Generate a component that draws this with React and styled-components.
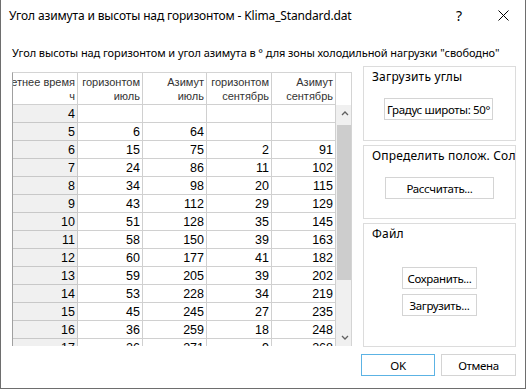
import React from 'react'
import styled, { createGlobalStyle } from 'styled-components'

const GlobalStyle = createGlobalStyle`
  html, body {
    margin: 0;
    padding: 0;
    background: #ffffff;
  }
  body {
    font-family: 'Noto Sans', 'Open Sans', sans-serif;
    font-size: 12px;
    color: #000;
  }
`

const uiFont = `'Noto Sans', 'Open Sans', sans-serif`
const gridFont = `'Liberation Sans', Arial, sans-serif`

const rows = [
  [4, '', '', '', ''],
  [5, 6, 64, '', ''],
  [6, 15, 75, 2, 91],
  [7, 24, 86, 11, 102],
  [8, 34, 98, 20, 115],
  [9, 43, 112, 29, 129],
  [10, 51, 128, 35, 145],
  [11, 58, 150, 39, 163],
  [12, 60, 177, 41, 182],
  [13, 59, 205, 39, 202],
  [14, 53, 228, 34, 219],
  [15, 45, 245, 27, 235],
  [16, 36, 259, 18, 248],
  [17, 26, 271, 9, 268],
]

const headers = [
  ['Летнее время', 'ч'],
  ['горизонтом', 'июль'],
  ['Азимут', 'июль'],
  ['горизонтом', 'сентябрь'],
  ['Азимут', 'сентябрь'],
]

const colWidths = [65, 65, 64, 65, 64]

const Window = styled.div`
  width: 526px;
  height: 389px;
  box-sizing: border-box;
  border: 1px solid #6e6e6e;
  border-top: none;
  background: #fff;
  display: flex;
  flex-direction: column;
  font-family: ${uiFont};
  overflow: hidden;
`

const TitleBar = styled.div`
  height: 31px;
  display: flex;
  align-items: center;
  padding-left: 8px;
  font-size: 12px;
  letter-spacing: -0.15px;
  color: #000;
`

const TitleText = styled.div`
  flex: 1;
  white-space: nowrap;
`

const TitleButton = styled.div`
  width: 44px;
  height: 31px;
  display: flex;
  align-items: center;
  justify-content: center;
  font-size: 14px;
  color: #000;
`

const Body = styled.div`
  flex: 1;
  display: flex;
  flex-direction: column;
  padding: 0 9px 0 11px;
`

const Subtitle = styled.div`
  height: 35px;
  display: flex;
  align-items: center;
  padding-top: 8px;
  box-sizing: border-box;
  font-size: 11px;
  letter-spacing: -0.08px;
  white-space: nowrap;
`

const Main = styled.div`
  display: flex;
  gap: 11px;
  height: 281px;
`

const GridFrame = styled.div`
  margin-top: 6px;
  width: 340px;
  height: 274px;
  box-sizing: border-box;
  border-left: 1px solid #a0a0a0;
  border-top: 1px solid #d4d4d4;
  border-right: 1px solid #d4d4d4;
  display: flex;
  overflow: hidden;
  font-family: ${gridFont};
  font-size: 11px;
`

const Table = styled.div`
  display: flex;
  flex-direction: column;
`

const Row = styled.div`
  display: flex;
  height: ${({ $h }) => $h}px;
  flex-shrink: 0;
`

const Cell = styled.div`
  width: ${({ $w }) => $w}px;
  box-sizing: border-box;
  border-right: 1px solid ${({ $side }) => ($side ? '#c8c8c8' : '#d0d0d0')};
  border-bottom: 1px solid ${({ $side }) => ($side ? '#c8c8c8' : '#d0d0d0')};
  background: ${({ $side }) => ($side ? '#f0f0f0' : '#fff')};
  display: flex;
  align-items: center;
  justify-content: flex-end;
  padding-right: 2px;
  font-size: 12.5px;
  color: #000;
  overflow: hidden;
  white-space: nowrap;
`

const HeadCell = styled.div`
  width: ${({ $w }) => $w}px;
  box-sizing: border-box;
  border-right: 1px solid #d0d0d0;
  border-bottom: 1px solid #d0d0d0;
  display: flex;
  flex-direction: column;
  align-items: flex-end;
  justify-content: center;
  padding-right: 2px;
  line-height: 14px;
  color: #333;
  overflow: hidden;
  white-space: nowrap;
`

const Scrollbar = styled.div`
  width: 17px;
  display: flex;
  flex-direction: column;
  flex-shrink: 0;
`

const ScrollHead = styled.div`
  height: 32px;
`

const Track = styled.div`
  flex: 1;
  background: #f0f0f0;
  display: flex;
  flex-direction: column;
  align-items: center;
`

const Arrow = styled.div`
  height: 17px;
  width: 17px;
  display: flex;
  align-items: center;
  justify-content: center;
`

const Thumb = styled.div`
  width: 15px;
  height: 155px;
  margin-top: 3px;
  background: #cdcdcd;
`

const Spacer = styled.div`
  flex: 1;
`

const Side = styled.div`
  width: 153px;
  display: flex;
  flex-direction: column;
  gap: 4px;
`

const Group = styled.div`
  height: ${({ $h }) => $h}px;
  box-sizing: border-box;
  border: 1px solid #dcdcdc;
  padding: 2px 0 0 8px;
  display: flex;
  flex-direction: column;
  align-items: flex-start;
  overflow: hidden;
`

const GroupTitle = styled.div`
  font-size: 12px;
  letter-spacing: 0.2px;
  line-height: 16px;
  white-space: nowrap;
`

const Button = styled.button`
  width: ${({ $w }) => $w}px;
  height: 22px;
  margin-top: ${({ $mt }) => $mt || 0}px;
  margin-left: ${({ $ml }) => $ml || 0}px;
  box-sizing: border-box;
  border: 1px solid ${({ $default }) => ($default ? '#5cb3e4' : '#d4d4d4')};
  background: #fff;
  font-family: ${uiFont};
  font-size: 11.5px;
  letter-spacing: -0.35px;
  color: #000;
  padding: 0;
  white-space: nowrap;
`

const Footer = styled.div`
  display: flex;
  justify-content: flex-end;
  gap: 6px;
  padding-top: 7px;
`

const Chevron = ({ up }) => (
  <svg width="8" height="5" viewBox="0 0 8 5">
    <path
      d={up ? 'M1 4 L4 1 L7 4' : 'M1 1 L4 4 L7 1'}
      fill="none"
      stroke="#606060"
      strokeWidth="1.3"
    />
  </svg>
)

export default function App() {
  return (
    <>
      <GlobalStyle />
      <Window>
        <TitleBar>
          <TitleText>Угол азимута и высоты над горизонтом - Klima_Standard.dat</TitleText>
          <TitleButton>?</TitleButton>
          <TitleButton>
            <svg width="11" height="11" viewBox="0 0 11 11">
              <path d="M0.5 0.5 L10.5 10.5 M10.5 0.5 L0.5 10.5" stroke="#000" strokeWidth="1" />
            </svg>
          </TitleButton>
        </TitleBar>
        <Body>
          <Subtitle>
            Угол высоты над горизонтом и угол азимута в ° для зоны холодильной нагрузки "свободно"
          </Subtitle>
          <Main>
            <GridFrame>
              <Table>
                <Row $h={32}>
                  {headers.map(([a, b], i) => (
                    <HeadCell key={i} $w={colWidths[i]}>
                      <span>{a}</span>
                      <span>{b}</span>
                    </HeadCell>
                  ))}
                </Row>
                {rows.map((r) => (
                  <Row key={r[0]} $h={18}>
                    {r.map((v, i) => (
                      <Cell key={i} $w={colWidths[i]} $side={i === 0}>
                        {v}
                      </Cell>
                    ))}
                  </Row>
                ))}
              </Table>
              <Scrollbar>
                <ScrollHead />
                <Track>
                  <Arrow>
                    <Chevron up />
                  </Arrow>
                  <Thumb />
                  <Spacer />
                  <Arrow>
                    <Chevron />
                  </Arrow>
                </Track>
              </Scrollbar>
            </GridFrame>
            <Side>
              <Group $h={75}>
                <GroupTitle>Загрузить углы</GroupTitle>
                <Button $w={109} $mt={13} $ml={12}>
                  Градус широты: 50°
                </Button>
              </Group>
              <Group $h={74}>
                <GroupTitle>Определить полож. Солнца</GroupTitle>
                <Button $w={109} $mt={13} $ml={13}>
                  Рассчитать...
                </Button>
              </Group>
              <Group $h={124}>
                <GroupTitle>Файл</GroupTitle>
                <Button $w={75} $mt={25} $ml={30}>
                  Сохранить...
                </Button>
                <Button $w={75} $mt={5} $ml={30}>
                  Загрузить...
                </Button>
              </Group>
            </Side>
          </Main>
          <Footer>
            <Button $w={74} $default>
              OK
            </Button>
            <Button $w={75}>Отмена</Button>
          </Footer>
        </Body>
      </Window>
    </>
  )
}
